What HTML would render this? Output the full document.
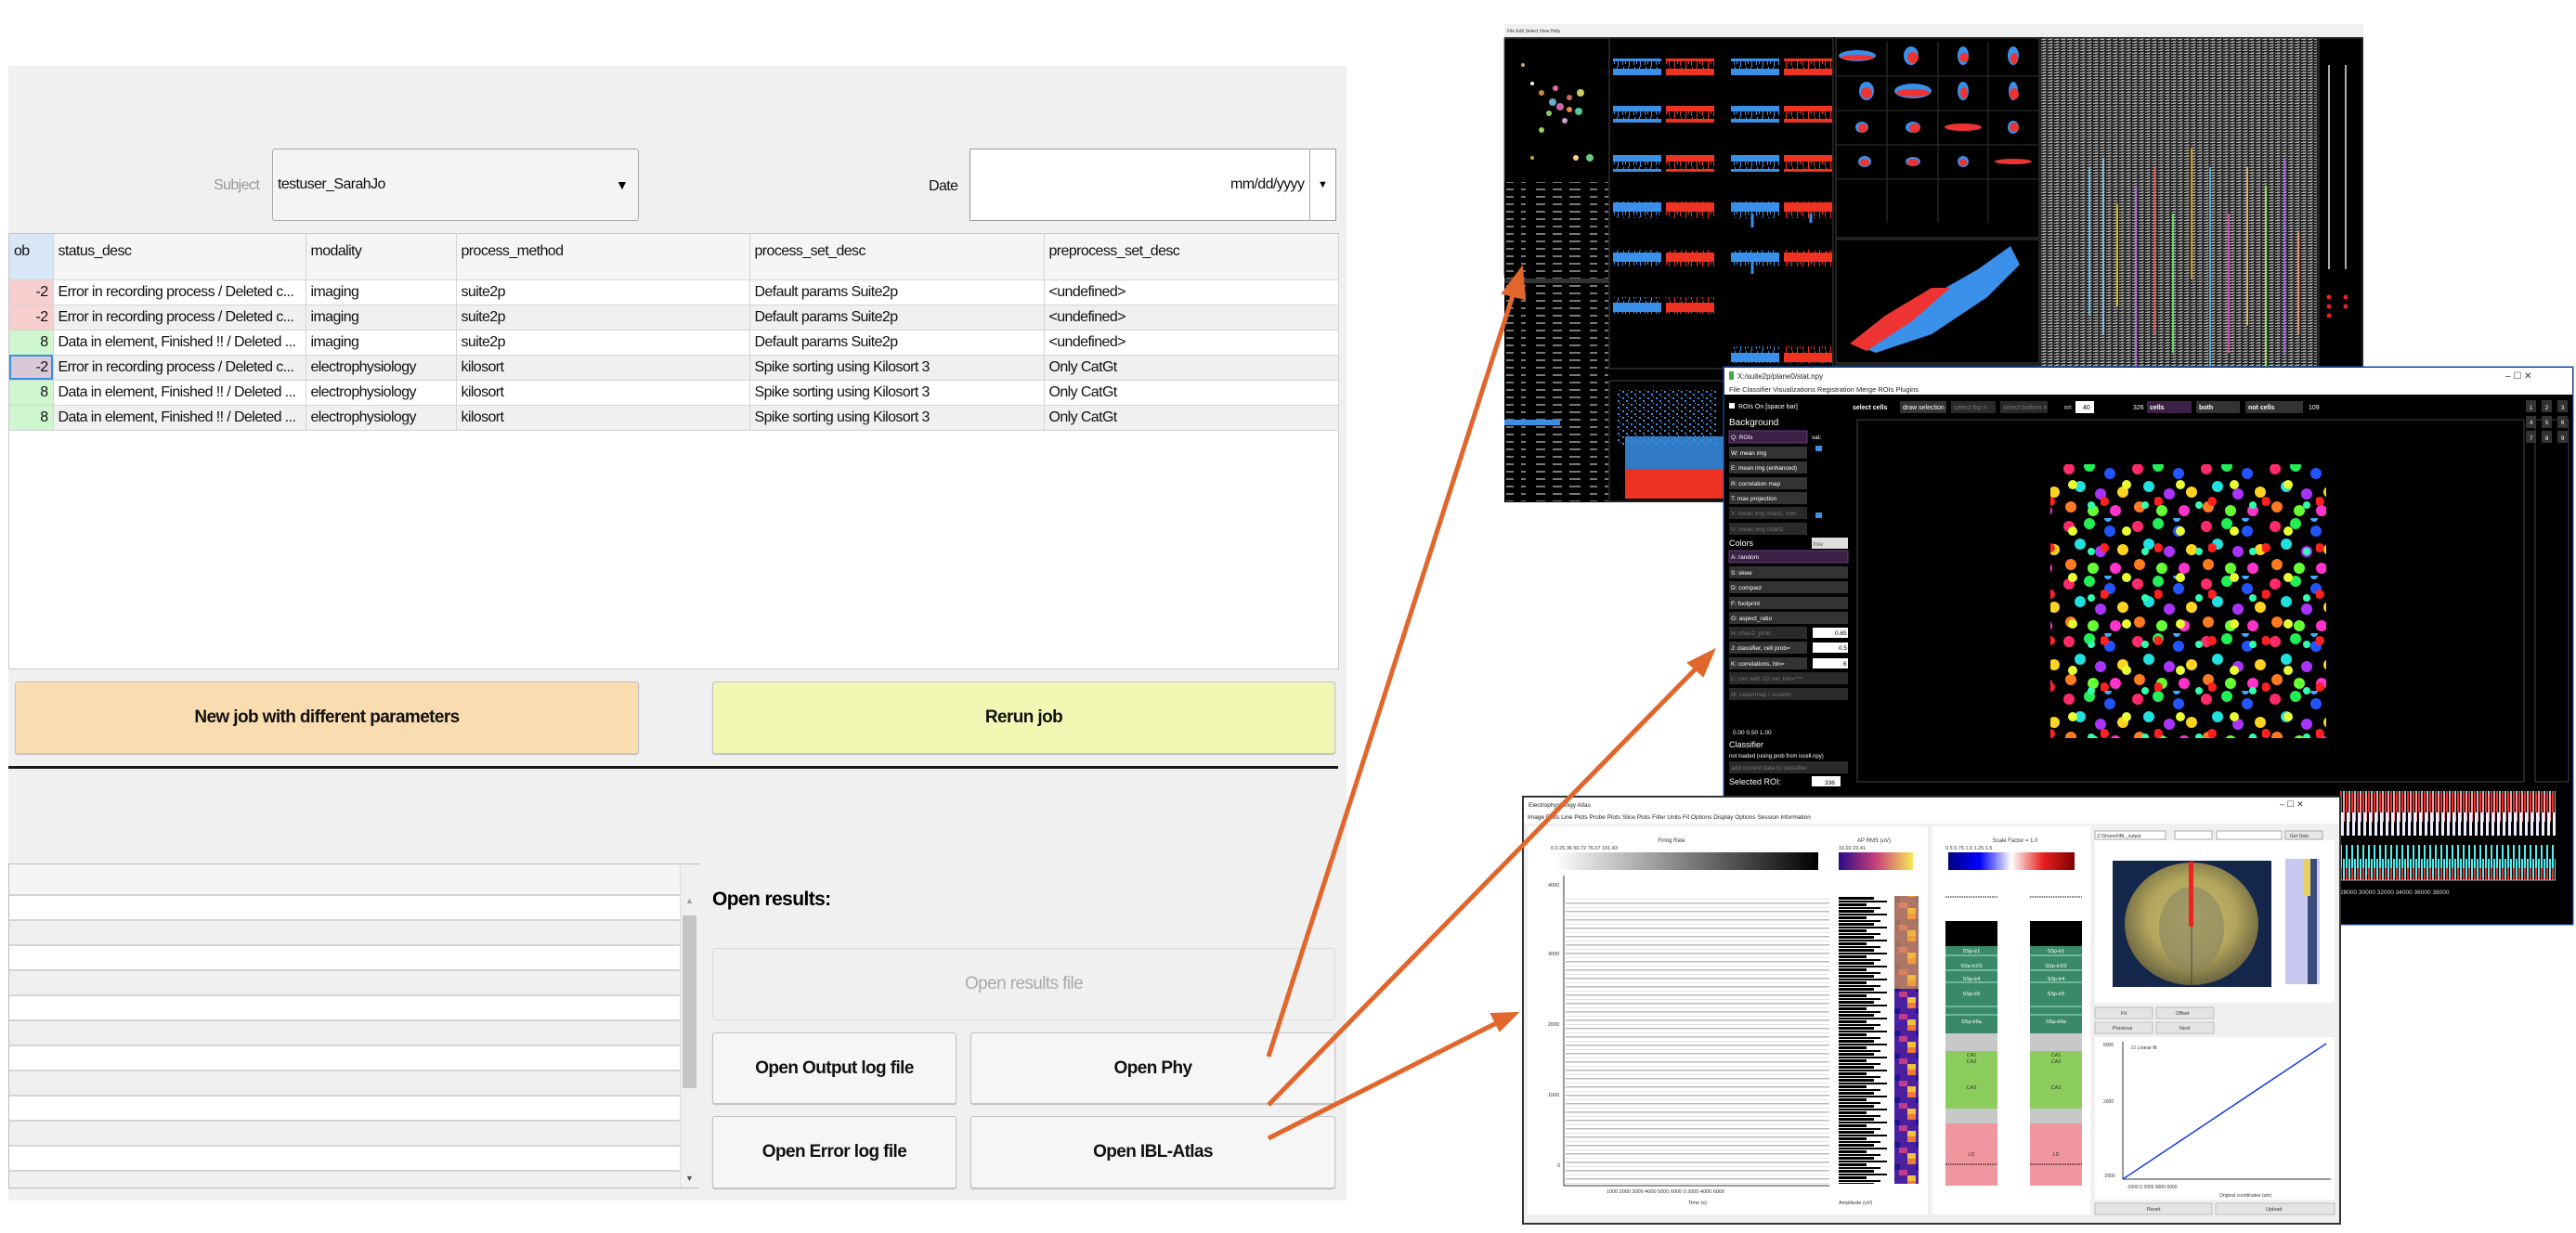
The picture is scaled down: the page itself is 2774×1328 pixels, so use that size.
<!DOCTYPE html>
<html><head><meta charset="utf-8">
<style>
*{margin:0;padding:0;box-sizing:border-box}
body{width:2774px;height:1328px;background:#fff;position:relative;overflow:hidden;font-family:"Liberation Sans",sans-serif}
.a{position:absolute}
#panel{left:9px;top:71px;width:1441px;height:1222px;background:#f0f0f0}
.tx{font-size:16px;color:#111;white-space:nowrap;letter-spacing:-0.6px}
table{border-collapse:collapse;table-layout:fixed}
td,th{font-weight:normal;text-align:left;font-size:16px;letter-spacing:-0.6px;padding:0 5px;white-space:nowrap;overflow:hidden;border-right:1px solid #d4d4d4;border-bottom:1px solid #d4d4d4;color:#111}
th{height:49px;vertical-align:top;padding-top:10px;background:#f5f5f5}
td{height:27px}
.btn{border:1px solid #c3c3c3;border-radius:3px;box-shadow:0 1px 1px #bbb;display:flex;align-items:center;justify-content:center;font-weight:bold;font-size:19px;letter-spacing:-0.6px;color:#111;background:#f6f6f6}
</style></head><body>
<div class="a" id="panel"></div>
<div class="a tx" style="left:230px;top:191px;color:#999">Subject</div>
<div class="a" style="left:293px;top:160px;width:395px;height:78px;border:1px solid #aaa;border-radius:3px;background:#f4f4f4"></div>
<div class="a tx" style="left:299px;top:190px">testuser_SarahJo</div>
<div class="a" style="left:663px;top:191px;font-size:14px">▼</div>
<div class="a tx" style="left:1000px;top:192px">Date</div>
<div class="a" style="left:1044px;top:160px;width:395px;height:78px;border:1px solid #999;background:#fff"></div>
<div class="a" style="left:1410px;top:160px;width:1px;height:78px;background:#aaa"></div>
<div class="a tx" style="left:1325px;top:190px">mm/dd/yyyy</div>
<div class="a" style="left:1419px;top:193px;font-size:11px">▼</div>

<div class="a" style="left:9px;top:251px;width:1433px;height:470px;background:#fff;border:1px solid #c8c8c8">
<table style="width:1431px">
<colgroup><col style="width:47px"><col style="width:272px"><col style="width:162px"><col style="width:316px"><col style="width:317px"><col style="width:317px"></colgroup>
<tr><th style="background:#d8e7f5">ob</th><th>status_desc</th><th>modality</th><th>process_method</th><th>process_set_desc</th><th>preprocess_set_desc</th></tr>
<tr><td style="background:#f7cfcf;text-align:right">-2</td><td>Error in recording process / Deleted c...</td><td>imaging</td><td>suite2p</td><td>Default params Suite2p</td><td>&lt;undefined&gt;</td></tr>
<tr style="background:#f0f0f0"><td style="background:#f7cfcf;text-align:right">-2</td><td>Error in recording process / Deleted c...</td><td>imaging</td><td>suite2p</td><td>Default params Suite2p</td><td>&lt;undefined&gt;</td></tr>
<tr><td style="background:#cff7cf;text-align:right">8</td><td>Data in element, Finished !! / Deleted ...</td><td>imaging</td><td>suite2p</td><td>Default params Suite2p</td><td>&lt;undefined&gt;</td></tr>
<tr style="background:#f0f0f0"><td style="background:#d9c8d8;text-align:right;outline:2px solid #3c8ee0;outline-offset:-2px">-2</td><td>Error in recording process / Deleted c...</td><td>electrophysiology</td><td>kilosort</td><td>Spike sorting using Kilosort 3</td><td>Only CatGt</td></tr>
<tr><td style="background:#cff7cf;text-align:right">8</td><td>Data in element, Finished !! / Deleted ...</td><td>electrophysiology</td><td>kilosort</td><td>Spike sorting using Kilosort 3</td><td>Only CatGt</td></tr>
<tr style="background:#f0f0f0"><td style="background:#cff7cf;text-align:right">8</td><td>Data in element, Finished !! / Deleted ...</td><td>electrophysiology</td><td>kilosort</td><td>Spike sorting using Kilosort 3</td><td>Only CatGt</td></tr>
</table></div>

<div class="a btn" style="left:16px;top:734px;width:672px;height:78px;background:#f9dcb0">New job with different parameters</div>
<div class="a btn" style="left:767px;top:734px;width:671px;height:78px;background:#f1f8b4">Rerun job</div>
<div class="a" style="left:9px;top:825px;width:1432px;height:3px;background:#1a1a1a"></div>

<div class="a" style="left:9px;top:930px;width:744px;height:350px;border:1px solid #bbb;background:
repeating-linear-gradient(#fff 0,#fff 25px,#d4d4d4 25px,#d4d4d4 27px,#f0f0f0 27px,#f0f0f0 52px,#d4d4d4 52px,#d4d4d4 54px) 0 34px/100% 100% no-repeat">
<div class="a" style="left:0;top:0;width:722px;height:34px;background:#f5f5f5;border-bottom:2px solid #d4d4d4"></div>
<div class="a" style="left:722px;top:0;width:21px;height:348px;background:#f0f0f0;border-left:1px solid #ddd"></div>
<div class="a" style="left:725px;top:55px;width:15px;height:186px;background:#c4c4c4"></div>
<div class="a" style="left:728px;top:34px;font-size:9px;color:#999">▲</div>
<div class="a" style="left:728px;top:333px;font-size:9px;color:#555">▼</div>
</div>
<div class="a" style="left:767px;top:957px;font-weight:bold;font-size:21px;letter-spacing:-0.6px">Open results:</div>
<div class="a btn" style="left:767px;top:1021px;width:671px;height:78px;color:#aaa;font-weight:normal;background:#f0f0f0;box-shadow:none;border-color:#ddd">Open results file</div>
<div class="a btn" style="left:767px;top:1112px;width:263px;height:77px">Open Output log file</div>
<div class="a btn" style="left:1045px;top:1112px;width:393px;height:77px">Open Phy</div>
<div class="a btn" style="left:767px;top:1202px;width:263px;height:78px">Open Error log file</div>
<div class="a btn" style="left:1045px;top:1202px;width:393px;height:78px">Open IBL-Atlas</div>

<svg class="a" style="left:0;top:0" width="2774" height="1328" font-family="Liberation Sans, sans-serif">
<defs>
<pattern id="noiseB" width="12" height="18" patternUnits="userSpaceOnUse"><rect y="2" width="12" height="10" fill="#3a8fe8"/><rect x="1" y="0" width="1" height="3" fill="#3a8fe8"/><rect x="8" y="0" width="1" height="2" fill="#3a8fe8"/><rect x="2" y="12" width="1" height="6" fill="#3a8fe8"/><rect x="7" y="12" width="1" height="4" fill="#3a8fe8"/><rect x="10" y="12" width="1" height="3" fill="#3a8fe8"/></pattern>
<pattern id="noiseR" width="12" height="18" patternUnits="userSpaceOnUse"><rect y="2" width="12" height="10" fill="#ee3322"/><rect x="3" y="0" width="1" height="3" fill="#ee3322"/><rect x="10" y="0" width="1" height="2" fill="#ee3322"/><rect x="3" y="12" width="1" height="6" fill="#ee3322"/><rect x="9" y="12" width="1" height="5" fill="#ee3322"/><rect x="6" y="12" width="1" height="3" fill="#ee3322"/></pattern>
<pattern id="trace" width="7" height="3" patternUnits="userSpaceOnUse"><rect width="7" height="3" fill="#222"/><rect width="5" height="1" fill="#aaa"/><rect x="2" y="2" width="4" height="1" fill="#777"/></pattern>
<pattern id="tbl" width="90" height="8" patternUnits="userSpaceOnUse"><rect width="90" height="8" fill="#000"/><rect x="2" y="3" width="8" height="2" fill="#777"/><rect x="18" y="3" width="5" height="2" fill="#777"/><rect x="34" y="3" width="10" height="2" fill="#777"/><rect x="52" y="3" width="10" height="2" fill="#777"/><rect x="70" y="3" width="12" height="2" fill="#777"/></pattern>
<pattern id="cells" width="74" height="62" patternUnits="userSpaceOnUse">
<rect width="74" height="62" fill="#000"/>
<circle cx="8" cy="9" r="6" fill="#ff2a6a"/><circle cx="30" cy="6" r="6" fill="#22ee55"/><circle cx="52" cy="14" r="6" fill="#2255ff"/><circle cx="66" cy="34" r="6" fill="#ffd420"/>
<circle cx="20" cy="28" r="6" fill="#20e0e0"/><circle cx="42" cy="36" r="6" fill="#aa33ff"/><circle cx="10" cy="50" r="6" fill="#ff7a20"/><circle cx="34" cy="54" r="6" fill="#66ff33"/><circle cx="58" cy="54" r="6" fill="#ff33cc"/><circle cx="50" cy="0" r="4" fill="#44aaff"/></pattern>
<pattern id="cells2" width="58" height="50" patternUnits="userSpaceOnUse"><circle cx="28" cy="22" r="5" fill="#e8ff30"/><circle cx="4" cy="40" r="5" fill="#ff2020"/><circle cx="48" cy="44" r="4" fill="#30ffb0"/></pattern>
<pattern id="tr2" width="6" height="90" patternUnits="userSpaceOnUse"><rect x="0" y="10" width="2" height="30" fill="#5ee"/><rect x="3" y="25" width="2" height="25" fill="#5ee"/><rect x="0" y="35" width="2" height="30" fill="#e33"/><rect x="3" y="45" width="2" height="30" fill="#f99"/><rect x="1" y="65" width="3" height="25" fill="#eef"/></pattern>
<pattern id="hl" width="10" height="9" patternUnits="userSpaceOnUse"><rect width="10" height="9" fill="#fff"/><rect width="10" height="1.5" fill="#bbb"/><rect y="5" width="10" height="1" fill="#e2e2e2"/></pattern>
<pattern id="hist" width="60" height="14" patternUnits="userSpaceOnUse"><rect width="38" height="3" fill="#000"/><rect y="4" width="52" height="2" fill="#000"/><rect y="7" width="30" height="3" fill="#000"/><rect y="11" width="45" height="2" fill="#000"/></pattern>
<pattern id="heat" width="26" height="24" patternUnits="userSpaceOnUse"><rect width="26" height="24" fill="#4a1fa0"/><rect width="9" height="6" fill="#f07a3a"/><rect x="9" y="6" width="9" height="6" fill="#1c1490"/><rect x="17" y="12" width="9" height="6" fill="#c33c8a"/><rect y="18" width="9" height="6" fill="#f0c040"/></pattern>
<pattern id="bdots" width="9" height="7" patternUnits="userSpaceOnUse"><rect x="1" y="1" width="2" height="2" fill="#3a8fe8"/><rect x="5" y="4" width="2" height="2" fill="#3a8fe8"/><rect x="7" y="0" width="1" height="1" fill="#aaa"/></pattern>
<linearGradient id="gry" x1="0" x2="1"><stop offset="0" stop-color="#fff"/><stop offset="1" stop-color="#000"/></linearGradient>
<linearGradient id="pla" x1="0" x2="1"><stop offset="0" stop-color="#2a0b8a"/><stop offset=".5" stop-color="#c8407a"/><stop offset="1" stop-color="#f8e858"/></linearGradient>
<linearGradient id="bwr" x1="0" x2="1"><stop offset="0" stop-color="#000080"/><stop offset=".25" stop-color="#0000ff"/><stop offset=".5" stop-color="#fff"/><stop offset=".75" stop-color="#e82020"/><stop offset="1" stop-color="#800000"/></linearGradient>
<radialGradient id="brain" cx=".5" cy=".45" r=".55"><stop offset="0" stop-color="#c8bd70"/><stop offset=".6" stop-color="#b2a55c"/><stop offset="1" stop-color="#6a6440"/></radialGradient>
</defs>

<!-- PHY -->
<rect x="1620" y="26" width="925" height="515" fill="#000"/>
<rect x="1620" y="26" width="925" height="14" fill="#f0f0f0"/>
<text x="1623" y="35" font-size="5" fill="#333">File  Edit  Select  View  Help</text>
<rect x="1620" y="41" width="113" height="255" fill="#000" stroke="#555"/>
<g><circle cx="1660" cy="100" r="3" fill="#c84"/><circle cx="1672" cy="110" r="4" fill="#6ac"/><circle cx="1680" cy="115" r="4" fill="#c6a"/><circle cx="1668" cy="122" r="3" fill="#8c6"/><circle cx="1690" cy="118" r="3" fill="#e84"/><circle cx="1700" cy="120" r="4" fill="#5c9"/><circle cx="1685" cy="130" r="3" fill="#c9c"/><circle cx="1702" cy="100" r="4" fill="#cc6"/><circle cx="1712" cy="170" r="4" fill="#6c8"/><circle cx="1697" cy="170" r="3" fill="#fc8"/><circle cx="1650" cy="90" r="2" fill="#fff"/><circle cx="1640" cy="70" r="2" fill="#ca6"/><circle cx="1675" cy="95" r="3" fill="#e6a"/><circle cx="1660" cy="140" r="3" fill="#9c5"/><circle cx="1690" cy="105" r="3" fill="#c66"/><circle cx="1650" cy="170" r="2" fill="#ca4"/></g>
<rect x="1620" y="196" width="112" height="108" fill="url(#tbl)"/>
<rect x="1620" y="307" width="112" height="105" fill="url(#tbl)"/>
<rect x="1620" y="300" width="112" height="5" fill="#333"/>
<rect x="1620" y="412" width="112" height="128" fill="url(#tbl)"/>
<rect x="1620" y="452" width="60" height="6" fill="#3c8ee0"/>
<rect x="1733" y="41" width="241" height="356" fill="#000" stroke="#444"/>
<g>
<rect x="1737" y="63" width="52" height="18" fill="url(#noiseB)"/><rect x="1794" y="63" width="52" height="18" fill="url(#noiseR)"/><rect x="1864" y="63" width="52" height="18" fill="url(#noiseB)"/><rect x="1921" y="63" width="52" height="18" fill="url(#noiseR)"/>
<rect x="1737" y="114" width="52" height="18" fill="url(#noiseB)"/><rect x="1794" y="114" width="52" height="18" fill="url(#noiseR)"/><rect x="1864" y="114" width="52" height="18" fill="url(#noiseB)"/><rect x="1921" y="114" width="52" height="18" fill="url(#noiseR)"/>
<rect x="1737" y="167" width="52" height="18" fill="url(#noiseB)"/><rect x="1794" y="167" width="52" height="18" fill="url(#noiseR)"/><rect x="1864" y="167" width="52" height="18" fill="url(#noiseB)"/><rect x="1921" y="167" width="52" height="18" fill="url(#noiseR)"/>
<rect x="1737" y="217" width="52" height="18" fill="url(#noiseB)"/><rect x="1794" y="217" width="52" height="18" fill="url(#noiseR)"/><rect x="1864" y="217" width="52" height="18" fill="url(#noiseB)"/><rect x="1921" y="217" width="52" height="18" fill="url(#noiseR)"/>
<rect x="1737" y="269" width="52" height="18" fill="url(#noiseB)"/><rect x="1794" y="269" width="52" height="18" fill="url(#noiseR)"/><rect x="1864" y="269" width="52" height="18" fill="url(#noiseB)"/><rect x="1921" y="269" width="52" height="18" fill="url(#noiseR)"/>
<rect x="1737" y="320" width="52" height="18" fill="url(#noiseB)"/><rect x="1794" y="320" width="52" height="18" fill="url(#noiseR)"/>
<rect x="1864" y="373" width="52" height="18" fill="url(#noiseB)"/><rect x="1921" y="373" width="52" height="18" fill="url(#noiseR)"/>
<path d="M1887 230V245M1887 282V295M1950 230V240" stroke="#3a8fe8" stroke-width="3"/>
</g>
<rect x="1733" y="410" width="241" height="130" fill="#000" stroke="#444"/>
<rect x="1740" y="420" width="110" height="60" fill="url(#bdots)"/>
<rect x="1750" y="470" width="110" height="40" fill="#3a8fe8" opacity=".85"/><rect x="1750" y="505" width="110" height="32" fill="#ee3322"/>
<rect x="1977" y="41" width="219" height="215" fill="#000" stroke="#444"/>
<g stroke="#333" fill="none"><path d="M2032 45V240M2087 45V240M2141 45V240M1977 82H2196M1977 119H2196M1977 156H2196M1977 193H2196"/></g>
<g><ellipse cx="2000" cy="60" rx="20" ry="6" fill="#3a8fe8"/><ellipse cx="2000" cy="62" rx="18" ry="3" fill="#e33"/><ellipse cx="2058" cy="60" rx="8" ry="10" fill="#3a8fe8"/><ellipse cx="2060" cy="62" rx="6" ry="6" fill="#e33"/><ellipse cx="2114" cy="60" rx="6" ry="10" fill="#3a8fe8"/><ellipse cx="2115" cy="62" rx="5" ry="5" fill="#e33"/><ellipse cx="2168" cy="60" rx="6" ry="10" fill="#3a8fe8"/><ellipse cx="2169" cy="63" rx="4" ry="6" fill="#e33"/>
<ellipse cx="2010" cy="98" rx="8" ry="10" fill="#3a8fe8"/><ellipse cx="2010" cy="100" rx="6" ry="6" fill="#e33"/><ellipse cx="2060" cy="98" rx="20" ry="8" fill="#3a8fe8"/><ellipse cx="2060" cy="100" rx="18" ry="4" fill="#e33"/><ellipse cx="2114" cy="98" rx="6" ry="10" fill="#3a8fe8"/><ellipse cx="2115" cy="100" rx="4" ry="6" fill="#e33"/><ellipse cx="2168" cy="98" rx="5" ry="10" fill="#3a8fe8"/><ellipse cx="2169" cy="101" rx="5" ry="6" fill="#e33"/>
<ellipse cx="2005" cy="137" rx="7" ry="6" fill="#3a8fe8"/><ellipse cx="2006" cy="138" rx="5" ry="5" fill="#e33"/><ellipse cx="2060" cy="137" rx="8" ry="6" fill="#3a8fe8"/><ellipse cx="2062" cy="138" rx="6" ry="5" fill="#e33"/><ellipse cx="2114" cy="137" rx="20" ry="4" fill="#e33"/><ellipse cx="2168" cy="137" rx="6" ry="7" fill="#3a8fe8"/><ellipse cx="2169" cy="137" rx="5" ry="5" fill="#e33"/>
<ellipse cx="2008" cy="174" rx="7" ry="6" fill="#3a8fe8"/><ellipse cx="2008" cy="175" rx="5" ry="4" fill="#e33"/><ellipse cx="2060" cy="174" rx="8" ry="5" fill="#3a8fe8"/><ellipse cx="2060" cy="175" rx="6" ry="4" fill="#e33"/><ellipse cx="2114" cy="174" rx="6" ry="6" fill="#3a8fe8"/><ellipse cx="2114" cy="175" rx="4" ry="4" fill="#e33"/><ellipse cx="2168" cy="174" rx="20" ry="3" fill="#e33"/></g>
<rect x="1977" y="258" width="219" height="133" fill="#000" stroke="#444"/>
<path d="M2000 372 L2060 330 L2130 290 L2165 265 L2175 285 L2140 320 L2080 360 L2020 380Z" fill="#3a8fe8"/>
<path d="M1992 370 L2030 340 L2080 310 L2100 310 L2060 345 L2010 378Z" fill="#e33"/>
<rect x="1977" y="393" width="219" height="147" fill="#000" stroke="#444"/>
<rect x="1983" y="420" width="20" height="28" fill="#3a8fe8"/><rect x="2020" y="415" width="18" height="33" fill="#def"/><rect x="2052" y="420" width="30" height="30" fill="#e33"/><rect x="2098" y="400" width="55" height="35" fill="#e33"/><rect x="2060" y="470" width="30" height="70" fill="#3a8fe8"/><rect x="2100" y="480" width="60" height="60" fill="#3a8fe8" opacity=".7"/><rect x="2015" y="488" width="20" height="52" fill="#e33"/>
<rect x="2198" y="41" width="297" height="498" fill="url(#trace)" stroke="#444"/>
<g stroke-width="1.5"><path d="M2250 180V340" stroke="#6cf"/><path d="M2265 170V360" stroke="#8cf"/><path d="M2280 220V330" stroke="#fc0"/><path d="M2300 200V420" stroke="#c6f"/><path d="M2320 180V360" stroke="#f55"/><path d="M2340 230V380" stroke="#6f6"/><path d="M2360 160V300" stroke="#fa0"/><path d="M2380 180V420" stroke="#5cf"/><path d="M2400 230V380" stroke="#f5c"/><path d="M2420 180V350" stroke="#fc6"/><path d="M2440 200V400" stroke="#9f5"/><path d="M2460 170V380" stroke="#a6f"/><path d="M2475 250V360" stroke="#f96"/><path d="M2230 420V520" stroke="#6c3"/><path d="M2290 420V520" stroke="#6c3"/><path d="M2350 420V520" stroke="#5c5"/><path d="M2430 420V520" stroke="#6c3"/></g>
<rect x="2497" y="41" width="47" height="498" fill="#000" stroke="#444"/>
<g fill="#aaa"><rect x="2507" y="70" width="2" height="220"/><rect x="2525" y="70" width="2" height="220"/></g>
<g fill="#e22"><circle cx="2508" cy="320" r="2.5"/><circle cx="2526" cy="320" r="2.5"/><circle cx="2508" cy="330" r="2.5"/><circle cx="2526" cy="330" r="2.5"/><circle cx="2508" cy="340" r="2.5"/></g>

<!-- SUITE2P -->
<rect x="1856" y="395" width="915" height="601" fill="#000" stroke="#2266cc"/>
<rect x="1857" y="396" width="913" height="29" fill="#fff"/>
<rect x="1862" y="400" width="5" height="9" fill="#4a4"/>
<text x="1871" y="408" font-size="8" fill="#222">X:/suite2p/plane0/stat.npy</text>
<text x="2698" y="408" font-size="10" fill="#333">–        ☐        ✕</text>
<text x="1862" y="422" font-size="7.5" fill="#222">File    Classifier    Visualizations    Registration    Merge ROIs    Plugins</text>
<g font-size="7" fill="#fff">
<rect x="1862" y="434" width="6" height="6" fill="#fff"/>
<text x="1872" y="440">ROIs On [space bar]</text>
<text x="1995" y="441" font-weight="bold">select cells</text>
<rect x="2046" y="432" width="50" height="13" fill="#333"/><text x="2049" y="441">draw selection</text>
<rect x="2101" y="432" width="48" height="13" fill="#2a2a2a"/><text x="2104" y="441" fill="#777">select top n</text>
<rect x="2154" y="432" width="51" height="13" fill="#2a2a2a"/><text x="2157" y="441" fill="#777">select bottom n</text>
<text x="2223" y="441">n=</text><rect x="2235" y="432" width="20" height="13" fill="#fff"/><text x="2243" y="441" fill="#000">40</text>
<text x="2297" y="441">326</text>
<rect x="2312" y="432" width="48" height="13" fill="#3b2145"/><text x="2315" y="441" font-weight="bold">cells</text>
<rect x="2365" y="432" width="47" height="13" fill="#333"/><text x="2368" y="441" font-weight="bold">both</text>
<rect x="2418" y="432" width="62" height="13" fill="#333"/><text x="2421" y="441" font-weight="bold">not cells</text>
<text x="2486" y="441">109</text>
<text x="1862" y="458" font-size="10">Background</text>
</g>
<g font-size="6.5" fill="#fff">
<rect x="1862" y="464" width="84" height="13" fill="#3b2145" stroke="#6a3a7a"/><text x="1864" y="473">Q: ROIs</text><text x="1951" y="473">sat:</text>
<rect x="1862" y="481" width="84" height="13" fill="#333"/><text x="1864" y="490">W: mean img</text>
<rect x="1862" y="497" width="84" height="13" fill="#333"/><text x="1864" y="506">E: mean img (enhanced)</text>
<rect x="1862" y="514" width="84" height="13" fill="#333"/><text x="1864" y="523">R: correlation map</text>
<rect x="1862" y="530" width="84" height="13" fill="#333"/><text x="1864" y="539">T: max projection</text>
<rect x="1862" y="546" width="84" height="13" fill="#2a2a2a"/><text x="1864" y="555" fill="#777">Y: mean img chan2, corr</text>
<rect x="1862" y="563" width="84" height="13" fill="#2a2a2a"/><text x="1864" y="572" fill="#777">U: mean img chan2</text>
<rect x="1955" y="480" width="7" height="6" fill="#3a8fe8"/><rect x="1955" y="552" width="7" height="6" fill="#3a8fe8"/>
<text x="1862" y="588" font-size="9">Colors</text><rect x="1951" y="579" width="39" height="12" fill="#ddd"/><text x="1953" y="588" fill="#555">hsv</text>
<rect x="1862" y="593" width="128" height="13" fill="#3b2145" stroke="#6a3a7a"/><text x="1864" y="602">A: random</text>
<rect x="1862" y="610" width="128" height="13" fill="#333"/><text x="1864" y="619">S: skew</text>
<rect x="1862" y="626" width="128" height="13" fill="#333"/><text x="1864" y="635">D: compact</text>
<rect x="1862" y="643" width="128" height="13" fill="#333"/><text x="1864" y="652">F: footprint</text>
<rect x="1862" y="659" width="128" height="13" fill="#333"/><text x="1864" y="668">G: aspect_ratio</text>
<rect x="1862" y="675" width="84" height="13" fill="#2a2a2a"/><text x="1864" y="684" fill="#777">H: chan2_prob</text><rect x="1952" y="676" width="38" height="11" fill="#fff"/><text x="1976" y="684" fill="#000">0.65</text>
<rect x="1862" y="691" width="84" height="13" fill="#333"/><text x="1864" y="700">J: classifier, cell prob=</text><rect x="1952" y="692" width="38" height="11" fill="#fff"/><text x="1980" y="700" fill="#000">0.5</text>
<rect x="1862" y="708" width="84" height="13" fill="#333"/><text x="1864" y="717">K: correlations, bin=</text><rect x="1952" y="709" width="38" height="11" fill="#fff"/><text x="1985" y="717" fill="#000">6</text>
<rect x="1862" y="724" width="128" height="13" fill="#2a2a2a"/><text x="1864" y="733" fill="#777">L: corr with 1D var, bin=^^^</text>
<rect x="1862" y="741" width="128" height="13" fill="#2a2a2a"/><text x="1864" y="750" fill="#777">M: rastermap / custom</text>
<text x="1866" y="791">0.00       0.50       1.00</text>
<text x="1862" y="805" font-size="9">Classifier</text>
<text x="1862" y="816" font-size="6">not loaded (using prob from iscell.npy)</text>
<rect x="1862" y="820" width="128" height="13" fill="#2a2a2a"/><text x="1864" y="829" fill="#777">add current data to classifier</text>
<text x="1862" y="845" font-size="9">Selected ROI:</text><rect x="1951" y="836" width="31" height="11" fill="#fff"/><text x="1965" y="845" fill="#000">336</text>
</g>
<rect x="2000" y="452" width="718" height="390" fill="none" stroke="#444"/>
<rect x="2730" y="452" width="36" height="390" fill="none" stroke="#444"/>
<g font-size="6" fill="#fff"><rect x="2720" y="431" width="11" height="13" fill="#333"/><rect x="2737" y="431" width="11" height="13" fill="#333"/><rect x="2754" y="431" width="11" height="13" fill="#333"/><rect x="2720" y="448" width="11" height="13" fill="#333"/><rect x="2737" y="448" width="11" height="13" fill="#333"/><rect x="2754" y="448" width="11" height="13" fill="#333"/><rect x="2720" y="464" width="11" height="13" fill="#333"/><rect x="2737" y="464" width="11" height="13" fill="#333"/><rect x="2754" y="464" width="11" height="13" fill="#333"/><text x="2724" y="441">1</text><text x="2741" y="441">2</text><text x="2758" y="441">3</text><text x="2724" y="457">4</text><text x="2741" y="457">5</text><text x="2758" y="457">6</text><text x="2724" y="474">7</text><text x="2741" y="474">8</text><text x="2758" y="474">9</text></g>
<rect x="2208" y="500" width="297" height="295" fill="url(#cells)"/>
<rect x="2208" y="500" width="297" height="295" fill="url(#cells2)"/>
<rect x="2520" y="852" width="232" height="96" fill="url(#tr2)"/>
<path d="M2520 948H2752" stroke="#aaa"/>
<text x="2520" y="963" font-size="6.5" fill="#ddd">28000         30000         32000         34000         36000         38000</text>

<!-- IBL -->
<rect x="1640" y="858" width="880" height="460" fill="#f0f0f0" stroke="#333" stroke-width="2"/>
<rect x="1641" y="859" width="878" height="28" fill="#fff"/>
<text x="1646" y="869" font-size="6.5" fill="#222">Electrophysiology Atlas</text>
<text x="2455" y="869" font-size="9" fill="#333">–      ☐      ✕</text>
<text x="1645" y="882" font-size="6.5" fill="#222">Image Plots   Line Plots   Probe Plots   Slice Plots   Filter Units   Fit Options   Display Options   Session Information</text>
<rect x="1645" y="890" width="431" height="418" fill="#fff"/>
<text x="1800" y="907" font-size="6" fill="#333" text-anchor="middle">Firing Rate</text>
<text x="1670" y="915" font-size="5.5" fill="#333">0.0                25.36               50.72               76.07              101.43</text>
<rect x="1673" y="918" width="285" height="19" fill="url(#gry)"/>
<text x="2018" y="907" font-size="6" fill="#333" text-anchor="middle">AP RMS (uV)</text>
<text x="1980" y="915" font-size="5.5" fill="#333">16.92                23.41</text>
<rect x="1980" y="918" width="80" height="19" fill="url(#pla)"/>
<path d="M1684 943V1277H1970" stroke="#333" fill="none"/>
<rect x="1686" y="965" width="284" height="310" fill="url(#hl)"/>
<rect x="1975" y="965" width="60" height="310" fill="url(#hist)"/>
<rect x="2040" y="965" width="26" height="310" fill="url(#heat)"/>
<rect x="2040" y="965" width="26" height="100" fill="#f0b040" opacity=".6"/>
<g font-size="5.5" fill="#333"><text x="1667" y="955">4000</text><text x="1667" y="1029">3000</text><text x="1667" y="1105">2000</text><text x="1667" y="1181">1000</text><text x="1677" y="1257">0</text>
<text x="1730" y="1285">1000      2000      3000      4000      5000      6000   0  2000 4000 6000</text>
<text x="1818" y="1297">Time (s)</text><text x="1980" y="1297">Amplitude (uV)</text></g>
<rect x="2081" y="890" width="170" height="418" fill="#fff"/>
<text x="2170" y="907" font-size="6" fill="#333" text-anchor="middle">Scale Factor = 1.0</text>
<text x="2095" y="915" font-size="5.5" fill="#333">0.5      0.75      1.0      1.25      1.5</text>
<rect x="2098" y="918" width="136" height="19" fill="url(#bwr)"/>
<g>
<rect x="2095" y="992" width="56" height="27" fill="#000"/><rect x="2186" y="992" width="56" height="27" fill="#000"/>
<rect x="2095" y="1019" width="56" height="94" fill="#3a8a6a"/><rect x="2186" y="1019" width="56" height="94" fill="#3a8a6a"/>
<rect x="2095" y="1113" width="56" height="19" fill="#c8c8c8"/><rect x="2186" y="1113" width="56" height="19" fill="#c8c8c8"/>
<rect x="2095" y="1132" width="56" height="62" fill="#8ccc5c"/><rect x="2186" y="1132" width="56" height="62" fill="#8ccc5c"/>
<rect x="2095" y="1194" width="56" height="16" fill="#c8c8c8"/><rect x="2186" y="1194" width="56" height="16" fill="#c8c8c8"/>
<rect x="2095" y="1210" width="56" height="67" fill="#f0969f"/><rect x="2186" y="1210" width="56" height="67" fill="#f0969f"/>
<g stroke="#cfe" stroke-width=".8"><path d="M2095 1029H2151M2095 1045H2151M2095 1058H2151M2095 1084H2151M2095 1093H2151M2186 1029H2242M2186 1045H2242M2186 1058H2242M2186 1084H2242M2186 1093H2242"/></g>
<g font-size="5.5" fill="#fff" text-anchor="middle"><text x="2123" y="1026">SSp-tr1</text><text x="2123" y="1042">SSp-tr2/3</text><text x="2123" y="1056">SSp-tr4</text><text x="2123" y="1072">SSp-tr5</text><text x="2123" y="1102">SSp-tr6a</text><text x="2214" y="1026">SSp-tr1</text><text x="2214" y="1042">SSp-tr2/3</text><text x="2214" y="1056">SSp-tr4</text><text x="2214" y="1072">SSp-tr5</text><text x="2214" y="1102">SSp-tr6a</text></g>
<g font-size="5.5" fill="#333" text-anchor="middle"><text x="2123" y="1138">CA1</text><text x="2123" y="1145">CA2</text><text x="2123" y="1173">CA3</text><text x="2123" y="1245">LD</text><text x="2214" y="1138">CA1</text><text x="2214" y="1145">CA2</text><text x="2214" y="1173">CA3</text><text x="2214" y="1245">LD</text></g>
<path d="M2095 966H2151M2186 966H2242M2095 1254H2151M2186 1254H2242" stroke="#000" stroke-dasharray="1.5 1"/>
</g>
<rect x="2256" y="890" width="258" height="418" fill="#f0f0f0"/>
<rect x="2256" y="905" width="258" height="175" fill="#fff"/>
<rect x="2256" y="895" width="76" height="9" fill="#fff" stroke="#aaa"/><text x="2258" y="902" font-size="5" fill="#333">Z:\Shared\IBL_output</text>
<rect x="2342" y="895" width="40" height="9" fill="#fff" stroke="#aaa"/><rect x="2387" y="895" width="70" height="9" fill="#fff" stroke="#aaa"/><rect x="2461" y="895" width="40" height="9" fill="#e8e8e8" stroke="#aaa"/><text x="2466" y="902" font-size="5" fill="#333">Get Data</text>
<rect x="2275" y="927" width="171" height="136" fill="#14264a"/>
<ellipse cx="2360" cy="995" rx="72" ry="66" fill="url(#brain)"/>
<ellipse cx="2360" cy="1000" rx="35" ry="45" fill="#8a8660" opacity=".6"/>
<path d="M2360 932V1063" stroke="#222" stroke-width=".6"/>
<rect x="2357" y="928" width="5" height="70" fill="#e22"/>
<rect x="2461" y="925" width="37" height="135" fill="#c9c8f0"/><rect x="2485" y="925" width="10" height="135" fill="#3a4a7a"/><rect x="2480" y="925" width="8" height="40" fill="#e8d060"/>
<g font-size="5.5" fill="#333"><rect x="2256" y="1085" width="62" height="12" fill="#e4e4e4" stroke="#bbb"/><rect x="2322" y="1085" width="62" height="12" fill="#e4e4e4" stroke="#bbb"/><rect x="2256" y="1101" width="62" height="12" fill="#e4e4e4" stroke="#bbb"/><rect x="2322" y="1101" width="62" height="12" fill="#e4e4e4" stroke="#bbb"/><text x="2284" y="1093">Fit</text><text x="2343" y="1093">Offset</text><text x="2275" y="1109">Previous</text><text x="2347" y="1109">Next</text></g>
<rect x="2256" y="1117" width="258" height="175" fill="#fff"/>
<path d="M2286 1122V1270H2510" stroke="#333" fill="none"/>
<path d="M2286 1270L2505 1124" stroke="#1a3ae8" stroke-width="1.5"/>
<text x="2295" y="1130" font-size="5.5" fill="#333">☑ Linear fit</text>
<g font-size="5" fill="#333"><text x="2265" y="1127">6000</text><text x="2265" y="1188">2000</text><text x="2265" y="1268">-2000</text><text x="2290" y="1280">-2000        0        2000       4000       6000</text><text x="2390" y="1289">Original coordinates (um)</text></g>
<rect x="2256" y="1296" width="126" height="12" fill="#e4e4e4" stroke="#bbb"/><rect x="2386" y="1296" width="128" height="12" fill="#e4e4e4" stroke="#bbb"/>
<text x="2312" y="1304" font-size="5.5" fill="#333">Reset</text><text x="2440" y="1304" font-size="5.5" fill="#333">Upload</text>

<!-- ARROWS -->
<g stroke="#e0662c" stroke-width="5" fill="#e0662c">
<path d="M1366 1138L1633 306"/>
<path d="M1366 1190L1838 708"/>
<path d="M1366 1226L1625 1095"/>
<path d="M1639 288L1642 322L1618 316Z" stroke-width="2"/>
<path d="M1846 700L1834 728L1818 714Z" stroke-width="2"/>
<path d="M1634 1091L1615 1110L1606 1092Z" stroke-width="2"/>
</g>
</svg>
</body></html>
